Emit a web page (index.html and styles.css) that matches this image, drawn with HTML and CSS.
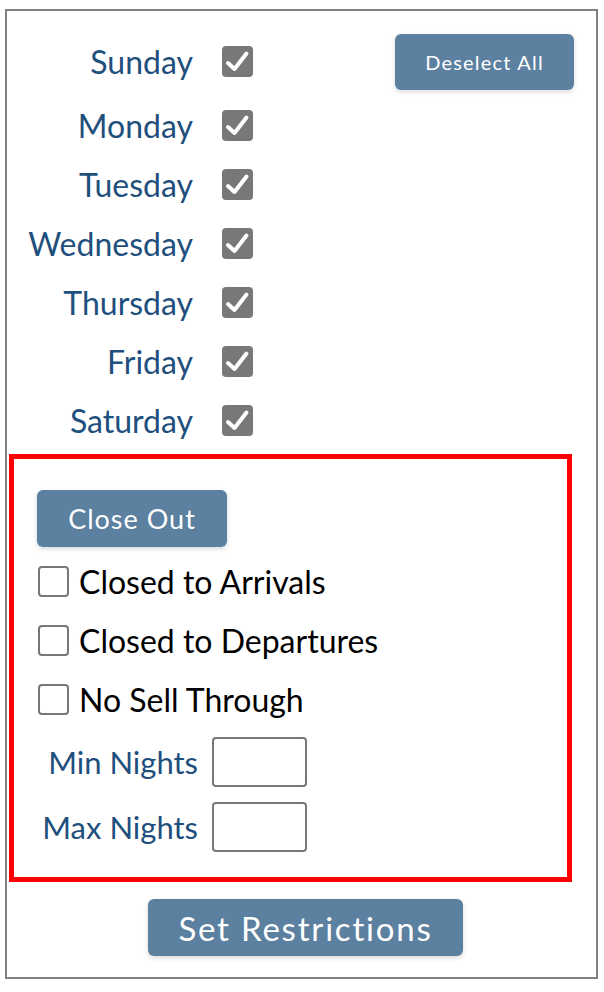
FILE: index.html
```html
<!DOCTYPE html>
<html lang="en">
<head>
    <meta charset="UTF-8">
    <meta name="viewport" content="width=device-width, initial-scale=1.0">
    <title>Restrictions</title>
    <link rel="stylesheet" href="styles.css">
</head>
<body>
    <div class="panel">
        <div class="days">
            <div class="day-row first">
                <span class="day-label">Sunday</span>
                <span class="check on"><svg viewBox="0 0 31 31"><path d="M6 17 L12.5 23 L24.5 7.5"/></svg></span>
                <button class="btn btn-deselect">Deselect All</button>
            </div>
            <div class="day-row">
                <span class="day-label">Monday</span>
                <span class="check on"><svg viewBox="0 0 31 31"><path d="M6 17 L12.5 23 L24.5 7.5"/></svg></span>
            </div>
            <div class="day-row">
                <span class="day-label">Tuesday</span>
                <span class="check on"><svg viewBox="0 0 31 31"><path d="M6 17 L12.5 23 L24.5 7.5"/></svg></span>
            </div>
            <div class="day-row">
                <span class="day-label">Wednesday</span>
                <span class="check on"><svg viewBox="0 0 31 31"><path d="M6 17 L12.5 23 L24.5 7.5"/></svg></span>
            </div>
            <div class="day-row">
                <span class="day-label">Thursday</span>
                <span class="check on"><svg viewBox="0 0 31 31"><path d="M6 17 L12.5 23 L24.5 7.5"/></svg></span>
            </div>
            <div class="day-row">
                <span class="day-label">Friday</span>
                <span class="check on"><svg viewBox="0 0 31 31"><path d="M6 17 L12.5 23 L24.5 7.5"/></svg></span>
            </div>
            <div class="day-row">
                <span class="day-label">Saturday</span>
                <span class="check on"><svg viewBox="0 0 31 31"><path d="M6 17 L12.5 23 L24.5 7.5"/></svg></span>
            </div>
        </div>

        <div class="restrict-box">
            <button class="btn btn-close">Close Out</button>
            <div class="opt-row">
                <span class="check off"></span>
                <span class="opt-label">Closed to Arrivals</span>
            </div>
            <div class="opt-row">
                <span class="check off"></span>
                <span class="opt-label">Closed to Departures</span>
            </div>
            <div class="opt-row">
                <span class="check off"></span>
                <span class="opt-label">No Sell Through</span>
            </div>
            <div class="night-row">
                <span class="night-label">Min Nights</span>
                <input type="text" class="night-input">
            </div>
            <div class="night-row">
                <span class="night-label">Max Nights</span>
                <input type="text" class="night-input">
            </div>
        </div>

        <div class="actions">
            <button class="btn btn-set">Set Restrictions</button>
        </div>
    </div>
</body>
</html>
```

FILE: styles.css
```css
* {
    margin: 0;
    padding: 0;
    box-sizing: border-box;
}
body {
    font-family: Lato, "Liberation Sans", sans-serif;
    background: #fff;
}
.panel {
    width: 593px;
    margin: 9px 0 0 5px;
    border: 2px solid #808080;
    padding: 16px 0 21px 0;
}
.day-row {
    display: flex;
    align-items: center;
    height: 59px;
}
.day-row.first {
    height: 69px;
}
.day-label {
    width: 186px;
    text-align: right;
    font-size: 32px;
    color: #1f4f7d;
}
.check {
    width: 31px;
    height: 31px;
    border-radius: 4px;
    flex-shrink: 0;
}
.check.on {
    margin-left: 29px;
    background-color: #787878;
}
.check.on svg {
    display: block;
    width: 31px;
    height: 31px;
}
.check.on path {
    fill: none;
    stroke: #fff;
    stroke-width: 4;
    stroke-linecap: round;
    stroke-linejoin: round;
}
.check.off {
    margin-left: 24px;
    border: 2px solid #777;
    background-color: #fff;
}
.btn {
    font-family: Lato, "Liberation Sans", sans-serif;
    color: #fff;
    background-color: #5c809f;
    border: none;
    border-radius: 6px;
    box-shadow: 0 2px 5px rgba(0, 0, 0, 0.15);
    cursor: pointer;
}
.btn-deselect {
    margin-left: auto;
    margin-right: 22px;
    width: 179px;
    height: 56px;
    font-size: 20px;
    letter-spacing: 1.2px;
}
.restrict-box {
    width: 563px;
    margin: 4px 0 0 2px;
    border: 5px solid #ff0000;
    padding: 31px 0 18px 0;
}
.btn-close {
    display: block;
    margin: 0 0 5px 23px;
    width: 190px;
    height: 57px;
    font-size: 27px;
    letter-spacing: 1px;
}
.opt-row {
    display: flex;
    align-items: center;
    height: 59px;
}
.opt-label {
    margin-left: 10px;
    font-size: 32px;
    color: #000;
}
.night-row {
    display: flex;
    align-items: center;
    height: 65px;
}
.night-label {
    width: 184px;
    text-align: right;
    font-size: 31px;
    color: #1f4f7d;
}
.night-input {
    margin-left: 14px;
    width: 95px;
    height: 50px;
    border: 2px solid #777;
    border-radius: 4px;
    font-size: 24px;
    padding: 0 6px;
}
.actions {
    display: flex;
    justify-content: center;
    margin-top: 17px;
    padding-left: 8px;
}
.btn-set {
    width: 315px;
    height: 57px;
    font-size: 33px;
    letter-spacing: 1.8px;
}
```
